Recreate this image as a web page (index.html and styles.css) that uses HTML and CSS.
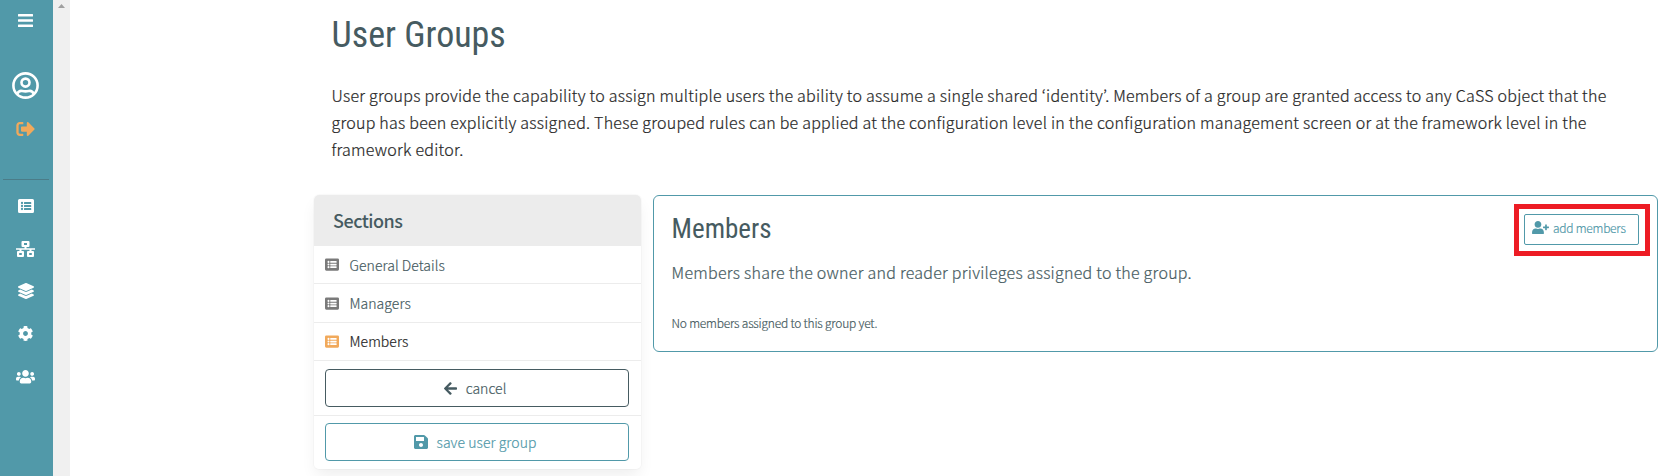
FILE: index.html
```html
<!DOCTYPE html>
<html lang="en">
<head>
<meta charset="utf-8">
<title>User Groups</title>
<link rel="stylesheet" href="styles.css">
</head>
<body>
<svg width="0" height="0" class="sprite">
  <symbol id="list" viewBox="0 0 512 448"><path fill-rule="evenodd" d="M48 0h416a48 48 0 0 1 48 48v352a48 48 0 0 1-48 48H48a48 48 0 0 1-48-48V48A48 48 0 0 1 48 0zM128 91a37 37 0 1 0 0 74 37 37 0 0 0 0-74zm0 96a37 37 0 1 0 0 74 37 37 0 0 0 0-74zm0 96a37 37 0 1 0 0 74 37 37 0 0 0 0-74zM204 96h208a12 12 0 0 1 12 12v40a12 12 0 0 1-12 12H204a12 12 0 0 1-12-12v-40a12 12 0 0 1 12-12zm0 96h208a12 12 0 0 1 12 12v40a12 12 0 0 1-12 12H204a12 12 0 0 1-12-12v-40a12 12 0 0 1 12-12zm0 96h208a12 12 0 0 1 12 12v40a12 12 0 0 1-12 12H204a12 12 0 0 1-12-12v-40a12 12 0 0 1 12-12z"/></symbol>
</svg>
<div class="app">
  <nav class="sidebar">
    <svg class="icon menu" viewBox="0 0 15 13"><path d="M.5 0h14a.5.5 0 0 1 .5.5v1.600a.5.5 0 0 1-.5.5H.5a.5.5 0 0 1-.5-.5V.5A.5.5 0 0 1 .5 0zm0 5.200h14a.5.5 0 0 1 .5.5v1.600a.5.5 0 0 1-.5.5H.5a.5.5 0 0 1-.5-.5V5.700a.5.5 0 0 1 .5-.5zm0 5.200h14a.5.5 0 0 1 .5.5v1.600a.5.5 0 0 1-.5.5H.5a.5.5 0 0 1-.5-.5v-1.600a.5.5 0 0 1 .5-.5z"/></svg>
    <svg class="icon account" viewBox="0 0 27 27"><g fill="none" stroke="currentColor" stroke-width="2.6"><circle cx="13.500" cy="13.500" r="12.100"/><circle cx="13.500" cy="10.600" r="4"/><path d="M5.300 21.700c1.200-2.500 3-3.200 5-2.700 2.200.5 4.200.5 6.400 0 2-.5 3.800.2 5 2.700"/></g></svg>
    <svg class="icon logout" viewBox="0 64 504 384"><path d="M497 273L329 441c-15 15-41 4.500-41-17v-96H152c-13.300 0-24-10.700-24-24v-96c0-13.300 10.700-24 24-24h136V88c0-21.400 25.900-32 41-17l168 168c9.300 9.400 9.300 24.600 0 34zM192 436v-40c0-6.600-5.400-12-12-12H96c-17.700 0-32-14.300-32-32V160c0-17.700 14.300-32 32-32h84c6.600 0 12-5.400 12-12V76c0-6.600-5.400-12-12-12H96c-53 0-96 43-96 96v192c0 53 43 96 96 96h84c6.600 0 12-5.400 12-12z"/></svg>
    <hr class="divider">
    <svg class="icon nav-list"><use href="#list"/></svg>
    <svg class="icon network" viewBox="0 0 19 16"><path fill-rule="evenodd" d="M6.500 0h6a1 1 0 0 1 1 1v4a1 1 0 0 1-1 1h-2v1.300H19v1.400h-3.500V10H17a1 1 0 0 1 1 1v4a1 1 0 0 1-1 1h-5a1 1 0 0 1-1-1v-4a1 1 0 0 1 1-1h1.500V8.700h-8V10H7a1 1 0 0 1 1 1v4a1 1 0 0 1-1 1H2a1 1 0 0 1-1-1v-4a1 1 0 0 1 1-1h1.500V8.700H0V7.300h8.500V6h-2a1 1 0 0 1-1-1V1a1 1 0 0 1 1-1zM8 2v2h3V2zM3.200 12v2h2.600v-2zm10 0v2h2.600v-2z"/></svg>
    <svg class="icon layers" viewBox="0 0 512 512"><path d="M12.410 148.020l232.940 105.670c6.800 3.090 14.490 3.090 21.290 0l232.940-105.670c16.550-7.510 16.550-32.520 0-40.030L266.650 2.310a25.607 25.607 0 0 0-21.290 0L12.410 107.980c-16.550 7.510-16.550 32.530 0 40.040zm487.180 88.280l-58.090-26.330-161.640 73.270c-7.560 3.430-15.590 5.170-23.860 5.170s-16.290-1.740-23.860-5.170L70.510 209.970l-58.100 26.330c-16.550 7.500-16.550 32.500 0 40l232.940 105.590c6.800 3.080 14.490 3.080 21.290 0L499.590 276.300c16.550-7.500 16.550-32.500 0-40zm0 127.800l-57.870-26.230-161.860 73.370c-7.560 3.430-15.590 5.170-23.860 5.170s-16.290-1.740-23.860-5.170L70.290 337.870 12.410 364.100c-16.550 7.500-16.550 32.500 0 40l232.940 105.590c6.800 3.080 14.490 3.080 21.290 0L499.590 404.100c16.550-7.500 16.550-32.500 0-40z"/></svg>
    <svg class="icon cog" viewBox="10 8 492 496"><path d="M487.400 315.700l-42.600-24.600c4.300-23.200 4.300-47 0-70.200l42.600-24.600c4.900-2.800 7.100-8.600 5.500-14-11.100-35.600-30-67.800-54.700-94.600-3.800-4.100-10-5.100-14.800-2.300L380.800 110c-17.900-15.400-38.500-27.300-60.800-35.100V25.800c0-5.600-3.900-10.500-9.400-11.700-36.700-8.200-74.300-7.800-109.200 0-5.500 1.200-9.400 6.100-9.400 11.700V75c-22.200 7.900-42.800 19.800-60.800 35.100L88.700 85.500c-4.900-2.800-11-1.900-14.800 2.300-24.700 26.700-43.600 58.900-54.700 94.600-1.700 5.400.6 11.200 5.500 14L67.300 221c-4.300 23.200-4.300 47 0 70.200l-42.600 24.600c-4.900 2.800-7.100 8.600-5.500 14 11.100 35.600 30 67.800 54.700 94.600 3.800 4.100 10 5.100 14.800 2.300l42.600-24.600c17.900 15.400 38.500 27.300 60.800 35.100v49.200c0 5.600 3.900 10.500 9.400 11.700 36.700 8.200 74.300 7.800 109.200 0 5.500-1.200 9.400-6.100 9.400-11.700v-49.200c22.200-7.900 42.800-19.800 60.800-35.100l42.600 24.600c4.900 2.800 11 1.900 14.800-2.300 24.700-26.700 43.600-58.900 54.700-94.600 1.500-5.500-.7-11.300-5.600-14.100zM256 336c-44.100 0-80-35.900-80-80s35.900-80 80-80 80 35.900 80 80-35.900 80-80 80z"/></svg>
    <svg class="icon users" viewBox="0 32 640 448"><path d="M96 224c35.300 0 64-28.700 64-64s-28.700-64-64-64-64 28.700-64 64 28.700 64 64 64zm448 0c35.300 0 64-28.700 64-64s-28.700-64-64-64-64 28.700-64 64 28.700 64 64 64zm32 32h-64c-17.600 0-33.500 7.100-45.100 18.600 40.300 22.100 68.900 62 75.100 109.400h66c17.700 0 32-14.300 32-32v-32c0-35.300-28.700-64-64-64zm-256 0c61.900 0 112-50.100 112-112S381.900 32 320 32 208 82.100 208 144s50.100 112 112 112zm76.800 32h-8.300c-20.800 10-43.900 16-68.500 16s-47.600-6-68.500-16h-8.300C179.600 288 128 339.600 128 403.200V432c0 26.500 21.500 48 48 48h288c26.500 0 48-21.500 48-48v-28.800c0-63.600-51.600-115.200-115.200-115.200zm-223.700-13.400C161.500 263.100 145.600 256 128 256H64c-35.300 0-64 28.700-64 64v32c0 17.700 14.300 32 32 32h65.900c6.300-47.400 34.900-87.300 75.200-109.400z"/></svg>
  </nav>
  <div class="scrollbar"><svg class="scroll-arrow" viewBox="0 0 7 4"><path d="M0 4 3.500 0 7 4z"/></svg></div>
  <main class="main">
    <header class="intro">
      <h1 class="title">User Groups</h1>
      <p class="lead">User groups provide the capability to assign multiple users the ability to assume a single shared ‘identity’. Members of a group are granted access to any CaSS object that the<br>group has been explicitly assigned. These grouped rules can be applied at the configuration level in the configuration management screen or at the framework level in the<br>framework editor.</p>
    </header>
    <div class="columns">
      <aside class="sections">
        <h2 class="sections-title">Sections</h2>
        <a class="item"><svg class="icon item-icon"><use href="#list"/></svg><span>General Details</span></a>
        <a class="item managers"><svg class="icon item-icon"><use href="#list"/></svg><span>Managers</span></a>
        <a class="item active"><svg class="icon item-icon"><use href="#list"/></svg><span>Members</span></a>
        <div class="action cancel-row"><button class="button cancel"><svg class="icon arrow" viewBox="0 37 448 438"><path d="M257.500 445.100l-22.200 22.200c-9.400 9.400-24.600 9.400-33.900 0L7 273c-9.400-9.400-9.400-24.600 0-33.900L201.400 44.700c9.400-9.400 24.600-9.400 33.900 0l22.200 22.200c9.500 9.500 9.300 25-.4 34.300L136.600 216H424c13.300 0 24 10.700 24 24v32c0 13.300-10.700 24-24 24H136.600l120.500 114.800c9.800 9.300 10 24.800.4 34.300z"/></svg><span>cancel</span></button></div>
        <div class="action"><button class="button save"><svg class="icon disk" viewBox="0 32 448 448"><path d="M433.941 129.941l-83.882-83.882A48 48 0 0 0 316.118 32H48C21.490 32 0 53.490 0 80v352c0 26.510 21.490 48 48 48h352c26.510 0 48-21.490 48-48V163.882a48 48 0 0 0-14.059-33.941zM224 416c-35.346 0-64-28.654-64-64s28.654-64 64-64 64 28.654 64 64-28.654 64-64 64zm96-304.520V212c0 6.627-5.373 12-12 12H76c-6.627 0-12-5.373-12-12V108c0-6.627 5.373-12 12-12h228.520c3.183 0 6.235 1.264 8.485 3.515l3.480 3.480A11.996 11.996 0 0 1 320 111.480z"/></svg><span>save user group</span></button></div>
      </aside>
      <section class="panel">
        <div class="panel-text">
          <h2 class="panel-title">Members</h2>
          <p class="panel-lead">Members share the owner and reader privileges assigned to the group.</p>
          <p class="empty">No members assigned to this group yet.</p>
        </div>
        <div class="highlight"><button class="add"><svg class="icon plus" viewBox="0 0 640 512"><path d="M624 208h-64v-64c0-8.800-7.200-16-16-16h-32c-8.800 0-16 7.200-16 16v64h-64c-8.800 0-16 7.200-16 16v32c0 8.800 7.200 16 16 16h64v64c0 8.800 7.200 16 16 16h32c8.800 0 16-7.200 16-16v-64h64c8.800 0 16-7.200 16-16v-32c0-8.800-7.200-16-16-16zm-400 48c70.700 0 128-57.300 128-128S294.700 0 224 0 96 57.300 96 128s57.300 128 128 128zm89.600 32h-16.700c-22.200 10.200-46.900 16-72.900 16s-50.600-5.800-72.900-16h-16.700C60.200 288 0 348.200 0 422.400V464c0 26.500 21.500 48 48 48h352c26.500 0 48-21.500 48-48v-41.600c0-74.200-60.200-134.400-134.400-134.400z"/></svg><span>add members</span></button></div>
      </section>
    </div>
  </main>
</div>
</body>
</html>
```
FILE: styles.css
```css
* { box-sizing: border-box; }
html, body { height: 100%; }
body {
  margin: 0;
  overflow: hidden;
  background: #fff;
  color: #465b61;
  font-family: "Noto Sans CJK KR", sans-serif;
  font-weight: 300;
}
h1, h2, p { margin: 0; white-space: nowrap; }
span { white-space: nowrap; }
.lead, .panel-lead, .empty, span { -webkit-text-stroke: .2px currentColor; }
.sprite { display: none; }
.app { display: flex; height: 476px; overflow: hidden; }
.icon { display: block; flex: none; fill: currentColor; }

.sidebar {
  width: 53px;
  padding: 14px 2px 0 0;
  background: #5199a9;
  color: #fff;
  display: flex;
  flex-direction: column;
  align-items: center;
}
.menu { width: 15px; height: 13px; }
.account { width: 27px; height: 27px; margin-top: 45px; }
.logout { width: 19px; height: 14px; margin-top: 23px; color: #f1a95b; }
.divider { width: 46px; height: 1px; border: 0; margin: 43px 0 0; background: #4b7c88; }
.nav-list { width: 16px; height: 14px; margin-top: 19px; }
.network { width: 19px; height: 16px; margin-top: 28px; }
.layers { width: 16px; height: 16px; margin-top: 26px; }
.cog { width: 15px; height: 15px; margin-top: 27px; }
.users { width: 19px; height: 13.500px; margin-top: 29px; }

.scrollbar { width: 17px; background: #f0f0f0; padding: 4px 0 0 5px; }
.scroll-arrow { display: block; width: 7px; height: 4px; fill: #a0a0a0; }

.main { flex: 1; padding-left: 244px; }
.intro { height: 195px; padding: 14px 0 0 17.500px; }
.title {
  font-family: "Roboto Condensed", Roboto, sans-serif;
  font-stretch: 75%;
  font-size: 36px;
  line-height: 42px;
  font-weight: 400;
}
.lead { margin-top: 26px; font-size: 16px; line-height: 27px; letter-spacing: .242px; color: #262626; }
.columns { display: flex; align-items: flex-start; gap: 12px; }

.sections {
  width: 327px;
  height: 274px;
  border-radius: 5px;
  overflow: hidden;
  box-shadow: 0 8px 16px -2px rgba(10, 10, 10, .07), 0 0 0 1px rgba(10, 10, 10, .02);
}
.sections-title { height: 51px; padding-left: 19px; background: #ececec; font-size: 18px; line-height: 50px; font-weight: 500; letter-spacing: -.5px; }
.item { display: flex; align-items: center; gap: 10.500px; height: 38px; padding-left: 11px; border-bottom: 1px solid #ececec; font-size: 14px; letter-spacing: .05px; }
.managers { height: 39px; }
.item-icon { width: 14px; height: 13px; color: #7a7a7a; }
.active { padding-bottom: 1px; color: #262626; }
.active .item-icon { color: #f1a95b; }
.action { padding: 7px 11px; }
.cancel-row { height: 55px; padding-top: 8px; border-bottom: 1px solid #ececec; }
.button {
  display: flex;
  align-items: center;
  justify-content: center;
  gap: 9px;
  width: 304px;
  height: 38px;
  padding: 0 10px 0 6px;
  border: 1px solid currentColor;
  border-radius: 4px;
  background: #fff;
  font: 300 14px "Noto Sans CJK KR", sans-serif;
}
.cancel { color: #465b61; }
.save { color: #5199a9; letter-spacing: .05px; }
.arrow { width: 13px; height: 13px; }
.disk { width: 14px; height: 14px; }

.panel {
  display: flex;
  justify-content: space-between;
  align-items: flex-start;
  width: 1005px;
  height: 157px;
  padding: 8px 7px 0 17.600px;
  border: 1px solid #5199a9;
  border-radius: 6px;
}
.panel-title { padding-top: 8px; font-family: "Roboto Condensed", Roboto, sans-serif; font-stretch: 75%; font-size: 27px; line-height: 34px; font-weight: 400; }
.panel-lead { margin-top: 13px; font-size: 16px; line-height: 27px; letter-spacing: .25px; }
.empty { margin-top: 28px; font-size: 12px; line-height: 18px; letter-spacing: -.21px; }
.highlight { padding: 5px 6px 6px 5px; border: 5px solid #ed1c24; }
.add {
  display: flex;
  align-items: center;
  gap: 4px;
  width: 115px;
  height: 31px;
  padding: 0 0 4px 7px;
  border: 1px solid #5199a9;
  border-radius: 2px;
  background: #fff;
  color: #5199a9;
  font: 300 12px "Noto Sans CJK KR", sans-serif;
  letter-spacing: -.25px;
}
.plus { width: 17px; height: 13.500px; }
```
